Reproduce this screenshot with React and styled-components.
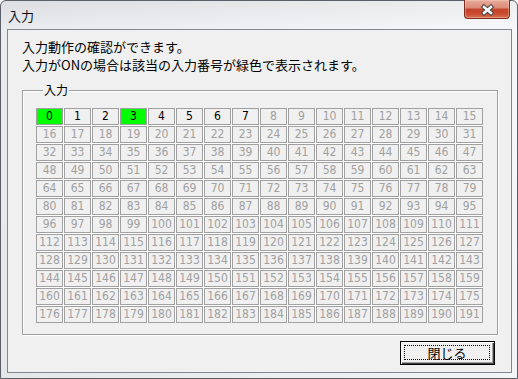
import React from 'react'
import styled, { createGlobalStyle } from 'styled-components'

const GlobalStyle = createGlobalStyle`
  html, body {
    margin: 0;
    padding: 0;
    background: #ffffff;
  }
  body {
    font-family: "Noto Sans CJK JP", "Liberation Sans", sans-serif;
  }
`

// inputs that are currently ON, and how many channels are wired
const ON_INPUTS = [0, 3]
const ENABLED_COUNT = 8
const TOTAL = 192

function App() {
  const cells = []
  for (let i = 0; i < TOTAL; i++) {
    cells.push(
      <Cell key={i} $on={ON_INPUTS.includes(i)} $enabled={i < ENABLED_COUNT}>
        {i}
      </Cell>
    )
  }

  return (
    <>
      <GlobalStyle />
      <Window>
        <TitleBar>
          <Title>入力</Title>
          <CloseButton>
            <svg width="44" height="19" viewBox="0 0 44 19">
              <path d="M19 7 L26 13 M26 7 L19 13" stroke="#4a4a4a" strokeWidth="4.6" strokeLinecap="square" fill="none" />
              <path d="M19 7 L26 13 M26 7 L19 13" stroke="#ffffff" strokeWidth="2.4" strokeLinecap="square" fill="none" />
            </svg>
          </CloseButton>
        </TitleBar>
        <Client>
          <Info>
            <div>入力動作の確認ができます。</div>
            <div>入力がONの場合は該当の入力番号が緑色で表示されます。</div>
          </Info>
          <GroupBox>
            <Legend>入力</Legend>
            <Grid>{cells}</Grid>
          </GroupBox>
          <CloseDialogButton>
            <FocusRect>閉じる</FocusRect>
          </CloseDialogButton>
        </Client>
      </Window>
    </>
  )
}
export default App

const Window = styled.div`
  box-sizing: border-box;
  width: 518px;
  height: 379px;
  border: 1px solid #5a6068;
  border-radius: 6px 6px 0 0;
  background:
    linear-gradient(to right, rgba(0, 0, 0, 0.03), rgba(255, 255, 255, 0.35)),
    linear-gradient(to bottom, #e3e5e8 0, #f2f3f5 28px, #eceef0 100%);
  display: flex;
  flex-direction: column;
  padding: 0 5px 5px 6px;
`
const TitleBar = styled.div`
  height: 28px;
  display: flex;
  align-items: center;
  justify-content: space-between;
`
const Title = styled.div`
  margin-left: 1px;
  font-size: 13px;
  color: #0a0a1a;
`
const CloseButton = styled.div`
  align-self: flex-start;
  box-sizing: border-box;
  width: 46px;
  height: 19px;
  margin-top: -1px;
  margin-right: 2px;
  border: 1px solid #7c2c20;
  border-top: none;
  border-radius: 0 0 4px 4px;
  background: linear-gradient(to bottom, #e8ab9c 0, #dc8a76 45%, #c4432b 50%, #c94a30 75%, #d8714f 100%);
  box-shadow: inset 0 0 0 1px rgba(255, 220, 210, 0.35);
  display: flex;
`
const Client = styled.div`
  flex: 1;
  border: 1px solid #828790;
  background: #f0f0f0;
  padding: 8px 13px 7px 14px;
  display: flex;
  flex-direction: column;
`
const Info = styled.div`
  font-size: 13px;
  line-height: 18px;
  color: #000;
`
const GroupBox = styled.div`
  margin-top: 16px;
  border: 1px solid #a0a0a0;
  box-shadow: 1px 1px 0 #ffffff, inset 1px 1px 0 #ffffff;
  padding: 0 13px 11px 13px;
`
const Legend = styled.div`
  width: fit-content;
  margin: -8px 0 0 7px;
  padding: 0 1px;
  background: #f0f0f0;
  font-size: 12px;
  line-height: 14px;
  color: #000;
`
const Grid = styled.div`
  margin-top: 11px;
  display: grid;
  grid-template-columns: repeat(16, 27px);
  grid-auto-rows: 17px;
  gap: 1px;
  background: #ffffff;
  width: fit-content;
`
const Cell = styled.div`
  box-sizing: border-box;
  border: 1px solid #a0a0a0;
  background: ${p => (p.$on ? '#00ff00' : '#f0f0f0')};
  color: ${p => (p.$enabled ? '#000000' : '#a0a0a0')};
  font-family: "Liberation Sans Narrow", "DejaVu Sans Condensed", "Liberation Sans", sans-serif;
  font-size: 12px;
  line-height: 15px;
  text-align: center;
`
const CloseDialogButton = styled.div`
  align-self: flex-end;
  box-sizing: border-box;
  width: 95px;
  height: 24px;
  margin-top: 6px;
  margin-right: 3px;
  border: 1px solid #000;
  background: #f0f0f0;
  box-shadow: inset 1px 1px 0 #ffffff, inset -1px -1px 0 #404040, inset -2px -2px 0 #a0a0a0;
  padding: 3px 4px 4px 3px;
  display: flex;
`
const FocusRect = styled.div`
  flex: 1;
  border: 1px dotted #000;
  display: flex;
  align-items: center;
  justify-content: center;
  font-size: 13px;
  color: #000;
`
